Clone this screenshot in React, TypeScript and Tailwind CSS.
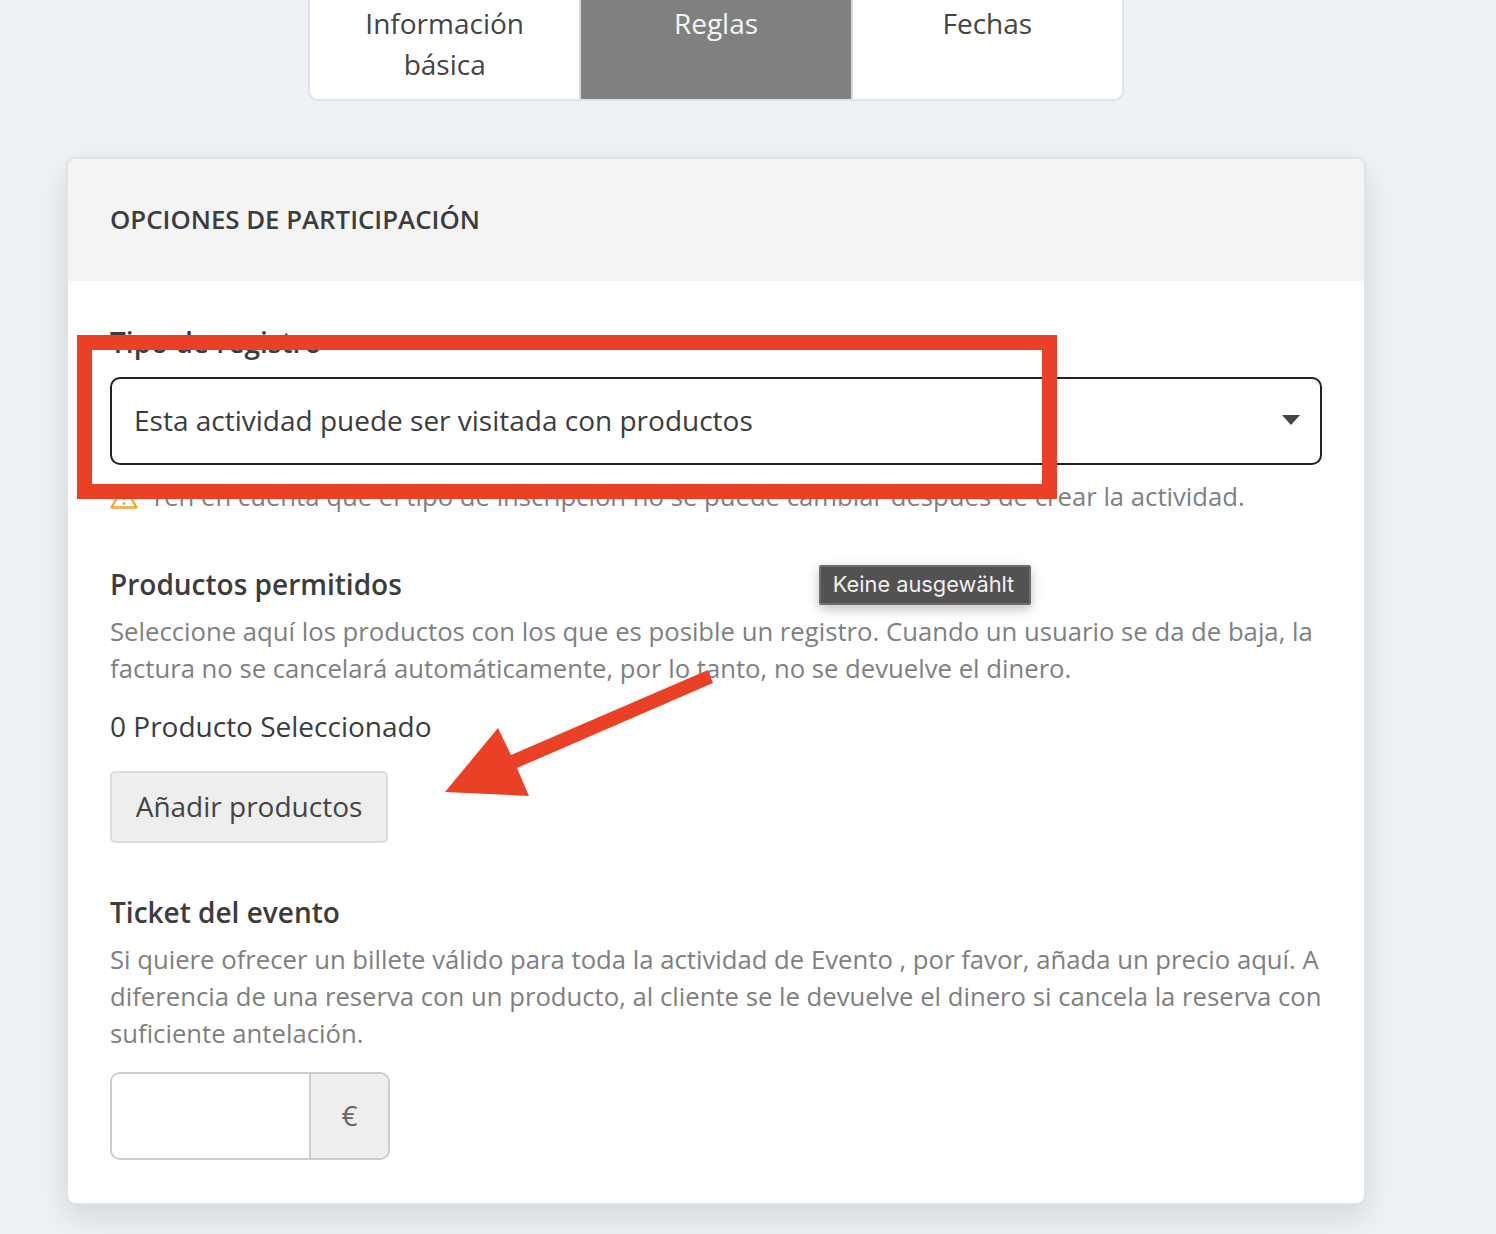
const font = { fontFamily: '"Open Sans", sans-serif' };

const TABS = [
  { label: "Información básica", active: false },
  { label: "Reglas", active: true },
  { label: "Fechas", active: false },
];

function Tabs() {
  return (
    <div className="mx-auto flex h-[101px] w-[816px] overflow-hidden rounded-b-[10px] border-x-2 border-b-2 border-[#dfe2e6] bg-white">
      {TABS.map((tab, i) => (
        <div
          key={tab.label}
          className={
            "flex-1 px-[40px] pt-[3px] text-center text-[28px] leading-[41px] " +
            (tab.active ? "bg-[#808080] text-[#f5f5f5] " : "text-[#444444] ") +
            (i === 1 ? "border-x-2 border-[#d8d8d8]" : "")
          }
        >
          {tab.label}
        </div>
      ))}
    </div>
  );
}

function WarningIcon() {
  return (
    <svg width="28" height="26" viewBox="0 0 28 26" fill="none" className="shrink-0">
      <path d="M14 2 L26.5 23.5 H1.5 Z" stroke="#f6a833" strokeWidth="2.4" strokeLinejoin="round" />
      <path d="M14 10 V16" stroke="#f6a833" strokeWidth="2.4" />
      <circle cx="14" cy="19.5" r="1.4" fill="#f6a833" />
    </svg>
  );
}

function Overlays() {
  return (
    <>
      <div className="absolute left-[77px] top-[335px] h-[164px] w-[980px] border-[15px] border-[#ea4026]" />
      <svg className="absolute left-[440px] top-[665px]" width="280" height="135" viewBox="0 0 280 135">
        <path d="M268 5 L273 18 L77 103 L89 131 L5 127 L58 63 L71 90 Z" fill="#ea4026" />
      </svg>
      <div className="absolute left-[819px] top-[565px] flex h-[40px] w-[212px] items-center justify-center rounded-[2px] border-2 border-[#6f6d6e] bg-[#545152] pb-[2px] pr-[3px] text-[21.8px] text-[#f0f0f0] shadow-[0_4px_12px_rgba(0,0,0,0.25)] [font-family:Inter,sans-serif]">
        Keine ausgewählt
      </div>
    </>
  );
}

export default function App() {
  return (
    <div className="relative h-[1234px] w-[1496px] overflow-hidden bg-[#eef1f6]" style={font}>
      <div className="ml-[66px] w-[1300px]">
        <Tabs />

        <div className="mt-[56px] h-[1048px] overflow-hidden rounded-[10px] border-2 border-[#dfe2e6] bg-white shadow-[0_12px_30px_rgba(0,0,0,0.12)]">
          <div className="flex h-[122px] items-center bg-[#f4f4f4] px-[42px] pb-[2px] text-[25.8px] font-[560] text-[#3c3c3c]">
            OPCIONES DE PARTICIPACIÓN
          </div>

          <div className="px-[42px] pt-[41px]">
            <div className="text-[28px] font-[560] leading-[41px] text-[#3c3c3c]">Tipo de registro</div>
            <div className="mt-[14px] flex h-[88px] items-center justify-between rounded-[10px] border-2 border-[#1f2224] bg-white pb-[2px] pl-[22px] pr-[20px] text-[28px] text-[#3c3c3c]">
              <span>Esta actividad puede ser visitada con productos</span>
              <span className="h-0 w-0 border-x-[9px] border-t-[10px] border-x-transparent border-t-[#444444]" />
            </div>
            <div className="mt-[13px] flex items-center gap-[12px] text-[25.7px] leading-[37px] text-[#808080]">
              <WarningIcon />
              <span>Ten en cuenta que el tipo de inscripción no se puede cambiar después de crear la actividad.</span>
            </div>

            <div className="mt-[49px] text-[28px] font-[560] leading-[41px] text-[#3c3c3c]">Productos permitidos</div>
            <p className="mt-[8px] text-[25.7px] leading-[37px] text-[#808080]">
              Seleccione aquí los productos con los que es posible un registro. Cuando un usuario se da de baja, la factura no se cancelará automáticamente, por lo tanto, no se devuelve el dinero.
            </p>
            <div className="mt-[19px] text-[28px] leading-[41px] text-[#3c3c3c]">0 Producto Seleccionado</div>
            <div className="mt-[24px] flex h-[72px] w-[278px] items-center justify-center rounded-[5px] border-2 border-[#dcdcdc] bg-[#eeeeee] pb-[2px] text-[28px] text-[#444444]">
              Añadir productos
            </div>

            <div className="mt-[49px] text-[28px] font-[560] leading-[41px] text-[#3c3c3c]">Ticket del evento</div>
            <p className="mt-[8px] text-[25.7px] leading-[37px] text-[#808080]">
              Si quiere ofrecer un billete válido para toda la actividad de Evento , por favor, añada un precio aquí. A diferencia de una reserva con un producto, al cliente se le devuelve el dinero si cancela la reserva con suficiente antelación.
            </p>
            <div className="mt-[20px] flex h-[88px] w-[280px] overflow-hidden rounded-[10px] border-2 border-[#cccccc]">
              <div className="w-[197px] bg-white" />
              <div className="flex flex-1 items-center justify-center border-l-2 border-[#cccccc] bg-[#eeeeee] pb-[2px] text-[28px] text-[#666666]">€</div>
            </div>
          </div>
        </div>
      </div>
      <Overlays />
    </div>
  );
}
